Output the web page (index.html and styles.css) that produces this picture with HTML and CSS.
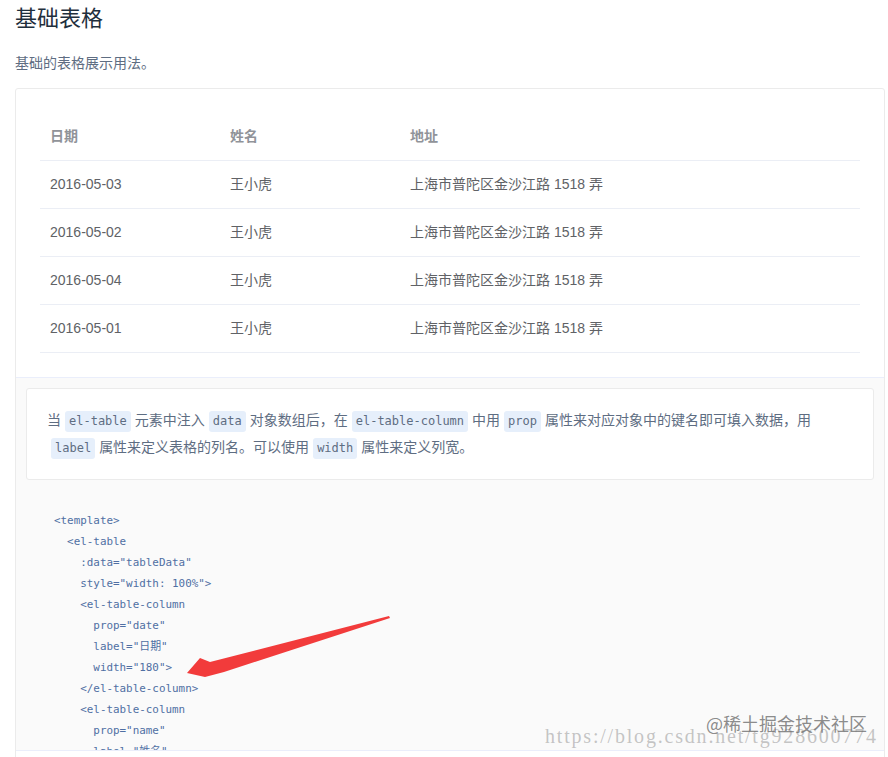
FILE: index.html
```html
<!DOCTYPE html>
<html lang="zh-CN">
<head>
<meta charset="utf-8">
<title>基础表格</title>
<link rel="stylesheet" href="styles.css">
</head>
<body>
<div class="page">
  <h3 class="title">基础表格</h3>
  <p class="subtitle">基础的表格展示用法。</p>
  <div class="demo-block">
    <div class="source">
      <table class="el-table">
        <colgroup><col class="c1"><col class="c2"><col></colgroup>
        <thead>
          <tr><th>日期</th><th>姓名</th><th>地址</th></tr>
        </thead>
        <tbody>
          <tr><td>2016-05-03</td><td>王小虎</td><td>上海市普陀区金沙江路 1518 弄</td></tr>
          <tr><td>2016-05-02</td><td>王小虎</td><td>上海市普陀区金沙江路 1518 弄</td></tr>
          <tr><td>2016-05-04</td><td>王小虎</td><td>上海市普陀区金沙江路 1518 弄</td></tr>
          <tr><td>2016-05-01</td><td>王小虎</td><td>上海市普陀区金沙江路 1518 弄</td></tr>
        </tbody>
      </table>
    </div>
    <div class="meta">
      <div class="description">
        <p>当<code>el-table</code>元素中注入<code>data</code>对象数组后，在<code>el-table-column</code>中用<code>prop</code>属性来对应对象中的键名即可填入数据，用<code>label</code>属性来定义表格的列名。可以使用<code>width</code>属性来定义列宽。</p>
      </div>
      <pre class="code">&lt;template&gt;
  &lt;el-table
    :data="tableData"
    style="width: 100%"&gt;
    &lt;el-table-column
      prop="date"
      label="日期"
      width="180"&gt;
    &lt;/el-table-column&gt;
    &lt;el-table-column
      prop="name"
      label="姓名"</pre>
    </div>
    <div class="control"></div>
  </div>
</div>
<svg class="arrow" width="888" height="757" viewBox="0 0 888 757">
  <polygon points="389,616 210,662 200,658 187,673 205,677 224,672 390,618" fill="#f23b3b"/>
</svg>
<div class="watermark">
  <span class="wm-url">https://blog.csdn.net/tg928600774</span>
  <span class="wm-brand">@稀土掘金技术社区</span>
</div>
</body>
</html>
```
FILE: styles.css
```css
html, body {
  margin: 0;
  padding: 0;
  background: #fff;
  overflow: hidden;
  height: 757px;
}
body {
  font-family: "Liberation Sans", "Noto Sans CJK SC", sans-serif;
  position: relative;
}
.page {
  padding: 0 4px 0 15px;
}
.title {
  margin: 4px 0 0;
  font-size: 22px;
  line-height: 30px;
  font-weight: 400;
  color: #1f2f3d;
}
.subtitle {
  margin: 18px 0 0;
  font-size: 14px;
  line-height: 22px;
  color: #5e6d82;
}
.demo-block {
  margin-top: 14px;
  border: 1px solid #ebebeb;
  border-radius: 3px;
  width: 868px;
}
.source {
  padding: 24px;
}
.el-table {
  width: 100%;
  border-collapse: collapse;
  font-size: 14px;
  color: #606266;
}
.el-table .c1, .el-table .c2 {
  width: 180px;
}
.el-table th, .el-table td {
  text-align: left;
  padding: 12px 10px;
  line-height: 23px;
  border-bottom: 1px solid #ebeef5;
}
.el-table th {
  color: #909399;
  font-weight: 700;
}
.meta {
  border-top: 1px solid #eaeefb;
  background: #fafafa;
  height: 372px;
  overflow: hidden;
}
.description {
  margin: 10px 10px 0;
  padding: 18px 20px;
  background: #fff;
  border: 1px solid #ebebeb;
  border-radius: 3px;
}
.description p {
  margin: 0;
  font-size: 14px;
  line-height: 27px;
  color: #5e6d82;
}
.description code {
  display: inline-block;
  font-family: "DejaVu Sans Mono", monospace;
  font-size: 12px;
  line-height: 21px;
  padding: 0 4px;
  margin: 0 4px;
  background: #e6effb;
  border-radius: 3px;
  color: #5e6d82;
}
.code {
  margin: 0;
  padding: 30px 38px 0;
  font-family: "DejaVu Sans Mono", "Noto Sans CJK SC", monospace;
  font-size: 10.9px;
  line-height: 21px;
  color: #4f6fa3;
}
.control {
  border-top: 1px solid #eaeefb;
  height: 44px;
  background: #fff;
}
.arrow {
  position: absolute;
  left: 0;
  top: 0;
  pointer-events: none;
}
.watermark {
  position: absolute;
  left: 545px;
  top: 708px;
  width: 340px;
  height: 45px;
  pointer-events: none;
}
.wm-url {
  position: absolute;
  left: 0;
  top: 17px;
  font-family: "Liberation Serif", serif;
  font-size: 20px;
  letter-spacing: 1.8px;
  color: rgba(150, 150, 150, 0.55);
  white-space: nowrap;
}
.wm-brand {
  position: absolute;
  left: 161px;
  top: 3px;
  font-family: "Noto Sans CJK SC", sans-serif;
  font-size: 18px;
  line-height: 24px;
  color: rgba(110, 110, 110, 0.8);
  white-space: nowrap;
}
```
